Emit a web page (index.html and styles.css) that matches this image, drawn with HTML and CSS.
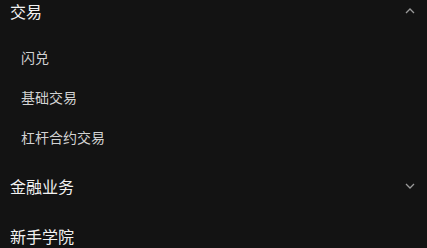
FILE: index.html
```html
<!DOCTYPE html>
<html lang="zh-CN">
<head>
<meta charset="utf-8">
<link rel="stylesheet" href="styles.css">
</head>
<body>
<nav class="menu">
  <section class="group">
    <div class="group-head">
      <span class="group-title">交易</span>
      <svg class="chev" viewBox="0 0 10 6" width="10" height="6"><path d="M1 5 L5 1 L9 5" fill="none" stroke="currentColor" stroke-width="1.3"/></svg>
    </div>
    <ul class="sub">
      <li class="sub-item">闪兑</li>
      <li class="sub-item">基础交易</li>
      <li class="sub-item">杠杆合约交易</li>
    </ul>
  </section>
  <section class="group">
    <div class="group-head">
      <span class="group-title">金融业务</span>
      <svg class="chev" viewBox="0 0 10 6" width="10" height="6"><path d="M1 1 L5 5 L9 1" fill="none" stroke="currentColor" stroke-width="1.3"/></svg>
    </div>
  </section>
  <section class="group">
    <div class="group-head last">
      <span class="group-title">新手学院</span>
    </div>
  </section>
</nav>
</body>
</html>
```
FILE: styles.css
```css
html, body {
  margin: 0;
  padding: 0;
  background: #131313;
  overflow: hidden;
}
body {
  font-family: "Noto Sans CJK SC", "Noto Sans", sans-serif;
}
.menu {
  margin-top: -13px;
}
.group-head {
  height: 48px;
  display: flex;
  align-items: center;
  justify-content: space-between;
  padding: 0 12px 0 10px;
}
.group-head.last {
  height: 52px;
}
.group-title {
  font-size: 16px;
  line-height: 1;
  color: #f2f2f2;
}
.chev {
  color: #9a9a9a;
  display: block;
}
.sub {
  list-style: none;
  margin: 0;
  padding: 2px 0 5px;
}
.sub-item {
  height: 40px;
  display: flex;
  align-items: center;
  padding-left: 21px;
  font-size: 14px;
  line-height: 1;
  color: #d2d2d2;
}
```
